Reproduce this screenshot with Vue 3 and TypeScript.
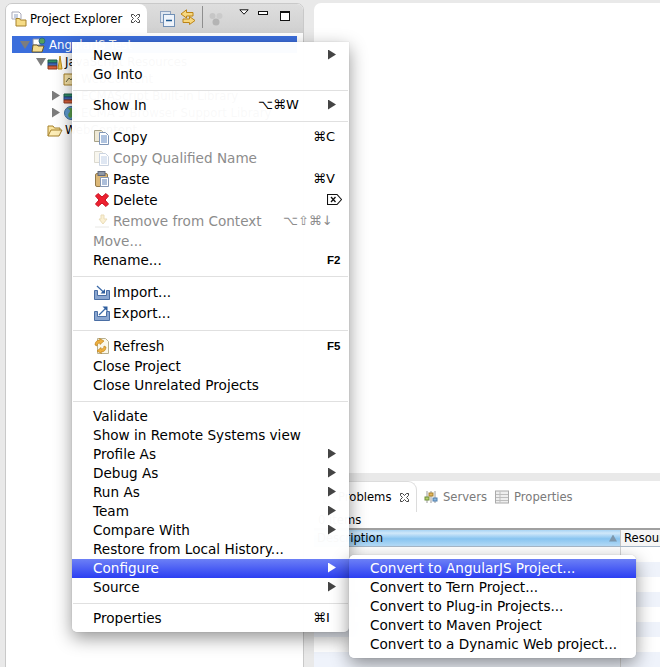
<script setup lang="ts">
type Item = { label?: string; sep?: boolean; icon?: string; sc?: string; kind?: string; arrow?: boolean; off?: boolean; on?: boolean; tall?: boolean }
const menu: Item[] = [
  { label: 'New', arrow: true },
  { label: 'Go Into' },
  { sep: true },
  { label: 'Show In', sc: '⌥⌘W', kind: 'show', arrow: true },
  { sep: true },
  { label: 'Copy', icon: 'copy', sc: '⌘C', kind: 'cmd', tall: true },
  { label: 'Copy Qualified Name', icon: 'copy', off: true, tall: true },
  { label: 'Paste', icon: 'paste', sc: '⌘V', kind: 'cmd', tall: true },
  { label: 'Delete', icon: 'delete', sc: 'del', kind: 'fn', tall: true },
  { label: 'Remove from Context', icon: 'remove', sc: '⌥⇧⌘↓', kind: 'long', off: true, tall: true },
  { label: 'Move...', off: true },
  { label: 'Rename...', sc: 'F2', kind: 'fn' },
  { sep: true },
  { label: 'Import...', icon: 'import', tall: true },
  { label: 'Export...', icon: 'export', tall: true },
  { sep: true },
  { label: 'Refresh', icon: 'refresh', sc: 'F5', kind: 'fn', tall: true },
  { label: 'Close Project' },
  { label: 'Close Unrelated Projects' },
  { sep: true },
  { label: 'Validate' },
  { label: 'Show in Remote Systems view' },
  { label: 'Profile As', arrow: true },
  { label: 'Debug As', arrow: true },
  { label: 'Run As', arrow: true },
  { label: 'Team', arrow: true },
  { label: 'Compare With', arrow: true },
  { label: 'Restore from Local History...' },
  { label: 'Configure', arrow: true, on: true },
  { label: 'Source', arrow: true },
  { sep: true },
  { label: 'Properties', sc: '⌘I', kind: 'cmd' },
]
const sub = [
  'Convert to AngularJS Project...',
  'Convert to Tern Project...',
  'Convert to Plug-in Projects...',
  'Convert to Maven Project',
  'Convert to a Dynamic Web project...',
]
const tree = [
  { label: 'AngularJS Test', depth: 0, tw: 'open', icon: 'project', sel: true },
  { label: 'JavaScript Resources', depth: 1, tw: 'open', icon: 'books' },
  { label: 'WebContent', depth: 2, tw: '', icon: 'jsfolder' },
  { label: 'ECMAScript Built-in Library', depth: 2, tw: 'closed', icon: 'books' },
  { label: 'ECMA 5 Browser Support Library', depth: 2, tw: 'closed', icon: 'globe' },
  { label: 'WebContent', depth: 1, tw: '', icon: 'folder' },
]
const stripes = Array.from({ length: 8 }, (_, i) => i)
</script>

<template>
  <div class="page">
    <section class="left">
      <header class="bar">
        <div class="tab">
          <svg class="ic16" viewBox="0 0 16 16">
            <path d="M1 1h7l2 2v5H1z" fill="#fff" stroke="#a9a9b8" />
            <path d="M3 4h4M3 6h4" stroke="#8f9fc0" />
            <path d="M5 7.500h3.500l1 1.500h5.500v6H5z" fill="#f6dc86" stroke="#a5802b" />
          </svg>
          <span class="tabtext">Project Explorer</span>
          <svg class="close" viewBox="0 0 11 11"><path d="M1.500 1.500h2l2 2 2-2h2v2l-2 2 2 2v2h-2l-2-2-2 2h-2v-2l2-2-2-2z" fill="#fff" stroke="#444" /></svg>
        </div>
        <div class="tools">
          <svg class="t1" viewBox="0 0 15 16">
            <rect x="0.500" y="0.500" width="10" height="11" fill="#dfe6f0" stroke="#8fa3c0" />
            <rect x="3.500" y="3.500" width="11" height="12" fill="#eef3fa" stroke="#6f8fb5" />
            <path d="M6 9.500h6" stroke="#1e5a92" stroke-width="1.500" />
          </svg>
          <svg class="t2" viewBox="0 0 16 16">
            <path d="M6.500 .8 1 5l5.500 4V7H13V3.500H6.500z" fill="#f7d77e" stroke="#bc8416" />
            <path d="M9.500 7.500 15 11.500 9.500 15.500v-2H3V10h6.500z" fill="#f7d77e" stroke="#bc8416" />
          </svg>
          <i class="vsep"></i>
          <svg class="t3" viewBox="0 0 14 14">
            <circle cx="3.500" cy="4" r="3" fill="#c6c6c6" /><circle cx="10.500" cy="4" r="3" fill="#cbcbcb" /><circle cx="7" cy="10" r="3.500" fill="#b4b4b4" />
          </svg>
          <svg class="t4" viewBox="0 0 10 6"><path d="M.8.800h8.400L5 5.200z" fill="#fff" stroke="#111" /></svg>
          <i class="mini"></i>
          <i class="maxi"></i>
        </div>
      </header>
      <div class="tree">
        <div v-for="r in tree" :key="r.label + r.depth" class="node" :class="[`d${r.depth}`, { sel: r.sel }]">
          <i class="tw" :class="r.tw"></i>
          <svg class="nodeic" viewBox="0 0 16 16">
            <template v-if="r.icon === 'project'">
              <path d="M2 2h7v6H2z" fill="#fff" stroke="#8a8fa8" />
              <circle cx="11" cy="4" r="3" fill="#55a05a" stroke="#2a6a8a" />
              <path d="M2 8h4l1 1h6l-2 6H1z" fill="#f4dc90" stroke="#6a5a2a" />
            </template>
            <template v-else-if="r.icon === 'books'">
              <path d="M1 6h9v3H1z" fill="#2f8f68" stroke="#1d5a44" /><path d="M1 9h9v3H1z" fill="#3f68b8" stroke="#24447e" /><path d="M1 12h9v3H1z" fill="#d9603a" stroke="#8a3a20" />
              <path d="M11 15 13 2l2 13z" fill="#f2c850" stroke="#b88a18" />
            </template>
            <template v-else-if="r.icon === 'jsfolder'">
              <path d="M1 3h12v11H1z" fill="#f8e4a8" stroke="#a5802b" /><path d="M3 11 6 7l2 2 3-4" fill="none" stroke="#664" />
            </template>
            <template v-else-if="r.icon === 'globe'">
              <circle cx="8" cy="8" r="6.500" fill="#5d9bd0" stroke="#3f6f9a" /><path d="M4 4c3 0 4 2 2 4s0 5 2 5c2-2 1-4 3-5 1 0 2-1 2-2-2-3-6-4-9-2z" fill="#5aa04e" />
            </template>
            <template v-else>
              <path d="M1 14V4h5l1.500 2H13v2" fill="#fbe6a2" stroke="#a5802b" />
              <path d="M1 14l3-6h11l-3 6z" fill="#fdeeb8" stroke="#a5802b" />
            </template>
          </svg>
          <span class="nodetext">{{ r.label }}</span>
        </div>
      </div>
    </section>

    <div class="right">
      <section class="editor"></section>
      <section class="bottom">
        <div class="btabs">
          <div class="btab active">
            <svg class="probic" viewBox="0 0 14 14"><path d="M2 1h10v12H2z" fill="#eee" stroke="#999" /></svg>
            <span>Problems</span>
            <svg class="close" viewBox="0 0 11 11"><path d="M1.500 1.500h2l2 2 2-2h2v2l-2 2 2 2v2h-2l-2-2-2 2h-2v-2l2-2-2-2z" fill="#fff" stroke="#444" /></svg>
          </div>
          <div class="btab">
            <svg class="ic14" viewBox="0 0 14 14">
              <path d="M3 1v12M7 1v12M11 1v12" stroke="#9a9a9a" />
              <rect x="1" y="7" width="4" height="3" fill="#b7cf6a" stroke="#6f8f3a" />
              <rect x="5" y="3" width="4" height="3" fill="#e6b75e" stroke="#a5802b" />
              <rect x="9" y="8" width="4" height="3" fill="#8ab6de" stroke="#4f7fae" />
            </svg>
            <span>Servers</span>
          </div>
          <div class="btab">
            <svg class="ic14" viewBox="0 0 14 13">
              <rect x=".5" y=".5" width="13" height="12" fill="#eee" stroke="#aaa" />
              <path d="M1 4h12M1 7h12M1 10h12M5 1v11" stroke="#bdbdbd" />
            </svg>
            <span>Properties</span>
          </div>
        </div>
        <div class="count">0 items</div>
        <div class="thead">
          <div class="th desc"><span>Description</span><i class="sort"></i></div>
          <div class="th res">Resource</div>
        </div>
        <div class="tbody">
          <div v-for="i in stripes" :key="i" class="trow"><i class="cell"></i></div>
        </div>
      </section>
    </div>

    <nav class="menu">
      <template v-for="(m, i) in menu" :key="i">
        <div v-if="m.sep" class="sep"><i></i></div>
        <div v-else class="row" :class="{ off: m.off, on: m.on, tall: m.tall }">
          <span v-if="m.icon" class="micon">
            <svg v-if="m.icon === 'copy'" viewBox="0 0 16 16">
              <path d="M.500 1.500h7l1 1v10h-8z" fill="#efe9d6" stroke="#a8a388" />
              <path d="M5.500 3.500h6l3 3v9h-9z" fill="#fff" stroke="#8096b6" />
              <path d="M7 7h6M7 9h6M7 11h6M7 13h6" stroke="#6088c0" />
            </svg>
            <svg v-else-if="m.icon === 'paste'" viewBox="0 0 16 16">
              <rect x="1.500" y="2.500" width="12" height="13" rx="1.500" fill="#dcb878" stroke="#92794a" />
              <rect x="4" y="0.500" width="7" height="4" fill="#8f99a8" stroke="#60687a" />
              <path d="M6.500 6.500h8v9h-8z" fill="#fff" stroke="#8798b5" />
              <path d="M8 9h5M8 11h5M8 13h5" stroke="#5a7fb5" />
            </svg>
            <svg v-else-if="m.icon === 'delete'" viewBox="0 0 16 16">
              <path d="M1.500 4 4 1.500 8 5 12 1.500 14.500 4 11 8 14.500 12 12 14.500 8 11 4 14.500 1.500 12 5 8z" fill="#ee2030" stroke="#c8101e" stroke-linejoin="round" />
            </svg>
            <svg v-else-if="m.icon === 'remove'" viewBox="0 0 16 16">
              <path d="M7 2h3v4h3l-4 5-4-5h2z" fill="#f6dc90" stroke="#c9a850" />
              <path d="M1 14h14" stroke="#c8c8c0" />
            </svg>
            <svg v-else-if="m.icon === 'import'" viewBox="0 0 16 16">
              <path d="M.500 6.500h3v5h9v-5h3v9H.500z" fill="#8aa6d0" stroke="#4a6ea4" />
              <path d="M3 2l6.500 6" stroke="#3c6aa8" stroke-width="1.200" /><path d="M11 9.500H6.500L11 5z" fill="#2f5e9e" />
            </svg>
            <svg v-else-if="m.icon === 'export'" viewBox="0 0 16 16">
              <path d="M.500 6.500h3v5h9v-5h3v9H.500z" fill="#8aa6d0" stroke="#4a6ea4" />
              <path d="M5 10l6.500-6.500" stroke="#3c6aa8" stroke-width="1.200" /><path d="M13.500 1.500v5l-5-5z" fill="#2f5e9e" />
            </svg>
            <svg v-else viewBox="0 0 16 16">
              <path d="M3.500 .5h8l3 3v12h-11z" fill="#fbf8ea" stroke="#b8b090" />
              <path d="M1 7c0-3 2-5 5-5l-.5-1.500L10 3 6 6.500V5C4 5 3 6 3 8z" fill="#eeb040" stroke="#b87a10" stroke-width=".6" />
              <path d="M12 9c0 3-2 5-5 5l.5 1.500L3 13l4-3.500V11c2 0 3-1 3-3z" fill="#eeb040" stroke="#b87a10" stroke-width=".6" />
            </svg>
          </span>
          <span class="lbl">{{ m.label }}</span>
          <span v-if="m.sc" class="sc" :class="m.kind">
            <svg v-if="m.sc === 'del'" class="delkey" viewBox="0 0 15 11"><path d="M.5.500h9.500l4.500 5-4.500 5H.5z" fill="none" stroke="#111" stroke-width="1.100" /><path d="M4 3l4.500 5M8.500 3 4 8" stroke="#111" stroke-width="1.300" /></svg>
            <template v-else>{{ m.sc }}</template>
          </span>
          <i v-if="m.arrow" class="arr"></i>
        </div>
      </template>
    </nav>

    <nav class="submenu">
      <div v-for="(s, i) in sub" :key="s" class="row" :class="{ on: i === 0 }"><span class="lbl">{{ s }}</span></div>
    </nav>
  </div>
</template>

<style>
html, body { margin: 0; padding: 0; background: #e9e9e9; }
</style>

<style scoped>
.page {
  position: relative;
  width: 660px;
  height: 667px;
  overflow: hidden;
  box-sizing: border-box;
  padding: 3px 0 0 5px;
  display: flex;
  gap: 10px;
  background: #e9e9e9;
  font-family: "DejaVu Sans", sans-serif;
  color: #000;
}
.left {
  width: 299px;
  flex: none;
  height: 700px;
  background: #fff;
  border: 1px solid #c9c9c9;
  box-sizing: border-box;
  border-radius: 7px 7px 0 0;
  overflow: hidden;
}
.bar {
  height: 29px;
  display: flex;
  background: linear-gradient(#dedede, #d0d0d0);
}
.tab {
  width: 141px;
  height: 29px;
  background: #fff;
  border-radius: 0 8px 0 0;
  display: flex;
  align-items: center;
  box-sizing: border-box;
  padding-left: 5px;
  font-size: 11.700px;
  flex: none;
}
.ic16 { width: 16px; height: 16px; flex: none; }
.tabtext { margin-left: 3px; width: 100px; white-space: nowrap; }
.close { width: 11px; height: 11px; flex: none; }
.tools { flex: 1; position: relative; display: flex; align-items: flex-start; }
.t1 { width: 15px; height: 16px; margin: 7px 0 0 13px; }
.t2 { width: 16px; height: 16px; margin: 5px 0 0 5px; }
.vsep { width: 1px; height: 22px; background: #8e8e8e; margin: 2px 0 0 6px; }
.t3 { width: 14px; height: 14px; margin: 8px 0 0 6px; }
.t4 { width: 10px; height: 6px; margin: 5px 0 0 16px; }
.mini { width: 8px; height: 2px; border: 1px solid #111; background: #fff; margin: 7px 0 0 9px; }
.maxi { width: 8px; height: 7px; border: 1px solid #111; border-top-width: 2px; background: #fff; margin: 7px 0 0 12px; }
.tree { padding: 3px 6px 0; }
.node {
  height: 17px;
  display: flex;
  align-items: center;
  font-size: 11.700px;
  white-space: nowrap;
  box-sizing: border-box;
}
.node.d0 { padding-left: 8px; }
.node.d1 { padding-left: 24px; }
.node.d2 { padding-left: 40px; }
.sel { background: #3b6edc; color: #fff; }
.tw { width: 8px; height: 10px; flex: none; margin-right: 3px; }
.tw.open { background: #7d7d7d; clip-path: polygon(0 15%, 100% 15%, 50% 95%); width: 10px; margin-right: 1px; }
.tw.closed { background: #7d7d7d; clip-path: polygon(0 0, 100% 50%, 0 100%); }
.nodeic { width: 16px; height: 16px; flex: none; margin-right: 2px; }
.right { flex: 1; display: flex; flex-direction: column; gap: 8px; min-width: 0; }
.editor { height: 470px; background: #fff; border-radius: 7px 0 0 0; flex: none; }
.bottom { flex: 1; background: #fff; overflow: hidden; }
.btabs { height: 31px; display: flex; align-items: center; font-size: 11.600px; color: #7a7a7a; }
.btab { display: flex; align-items: center; height: 31px; box-sizing: border-box; white-space: nowrap; }
.btab span { margin-left: 5px; }
.btab.active {
  width: 103px;
  flex: none;
  color: #000;
  border: 1px solid #dcdcdc;
  border-left: 0;
  border-bottom: 0;
  border-radius: 0 9px 0 0;
  padding-left: 8px;
}
.btab.active .close { margin-left: 8px; }
.btab.active span { margin-left: 2px; }
.probic { width: 14px; height: 14px; flex: none; }
.btab:nth-child(2) { margin-left: 7px; width: 71px; }
.ic14 { width: 14px; height: 14px; flex: none; }
.count { height: 16px; line-height: 16px; font-size: 11.600px; padding-left: 4px; white-space: nowrap; }
.thead { height: 19px; display: flex; box-sizing: border-box; border-top: 2px solid #a0a0a0; border-bottom: 1px solid #a8b8c8; font-size: 11.600px; }
.th { height: 16px; line-height: 16px; white-space: nowrap; overflow: hidden; box-sizing: border-box; }
.desc {
  width: 306px;
  flex: none;
  padding: 0 3px;
  display: flex;
  align-items: center;
  justify-content: space-between;
  background: linear-gradient(#a8d4f4, #d0e8fa 20%, #88c4f0 55%, #b6dcf8);
}
.sort { width: 8px; height: 7px; background: #7d97ad; clip-path: polygon(50% 0, 100% 100%, 0 100%); }
.res { flex: 1; padding-left: 3px; border-left: 1px solid #c6c6c6; background: #f6f6f6; }
.trow { height: 15px; }
.trow:nth-child(even) { background: #eff3fb; }
.cell { display: block; box-sizing: border-box; width: 307px; height: 15px; border-right: 1px solid #d4d4d4; }
.menu, .submenu {
  position: absolute;
  box-sizing: border-box;
  background: rgba(255, 255, 255, 0.975);
  box-shadow: 0 6px 18px rgba(0, 0, 0, 0.42), 0 0 1px rgba(0, 0, 0, 0.3);
  padding: 4px 0;
  font-size: 13.600px;
  white-space: nowrap;
}
.menu { left: 72px; top: 42px; width: 277px; height: 590px; border-radius: 0 0 5px 5px; }
.submenu { left: 349px; top: 555px; width: 287px; height: 103px; border-radius: 5px; background: rgba(255, 255, 255, 0.97); }
.row {
  height: 19px;
  display: flex;
  align-items: center;
  box-sizing: border-box;
  padding: 0 13px 2px 21px;
}
.row.tall { height: 21px; }
.row.off { color: #8c8c8c; }
.row.off .micon { opacity: 0.4; }
.row.on { color: #fff; background: linear-gradient(#6c80f6, #2b3ef2); }
.micon { width: 20px; height: 16px; flex: none; }
.micon svg { display: block; width: 16px; height: 16px; margin-left: 1px; }
.lbl { flex: 1; min-width: 0; }
.sc { flex: none; font-family: "DejaVu Sans", sans-serif; }
.sc.cmd { width: 23px; font-size: 13px; }
.sc.fn { width: 9px; font-family: "Liberation Sans", sans-serif; font-weight: bold; font-size: 11.500px; overflow: visible; }
.sc.show { width: 70px; font-size: 13px; }
.sc.long { width: 53px; font-size: 13px; }
.delkey { display: block; width: 15px; height: 11px; }
.arr { width: 8px; height: 10px; flex: none; background: #444; clip-path: polygon(0 0, 100% 50%, 0 100%); }
.on .arr { background: #fff; }
.sep { height: 12px; display: flex; align-items: center; padding: 0 1px; }
.sep i { display: block; width: 100%; height: 1px; background: #e0e0e0; }
</style>
